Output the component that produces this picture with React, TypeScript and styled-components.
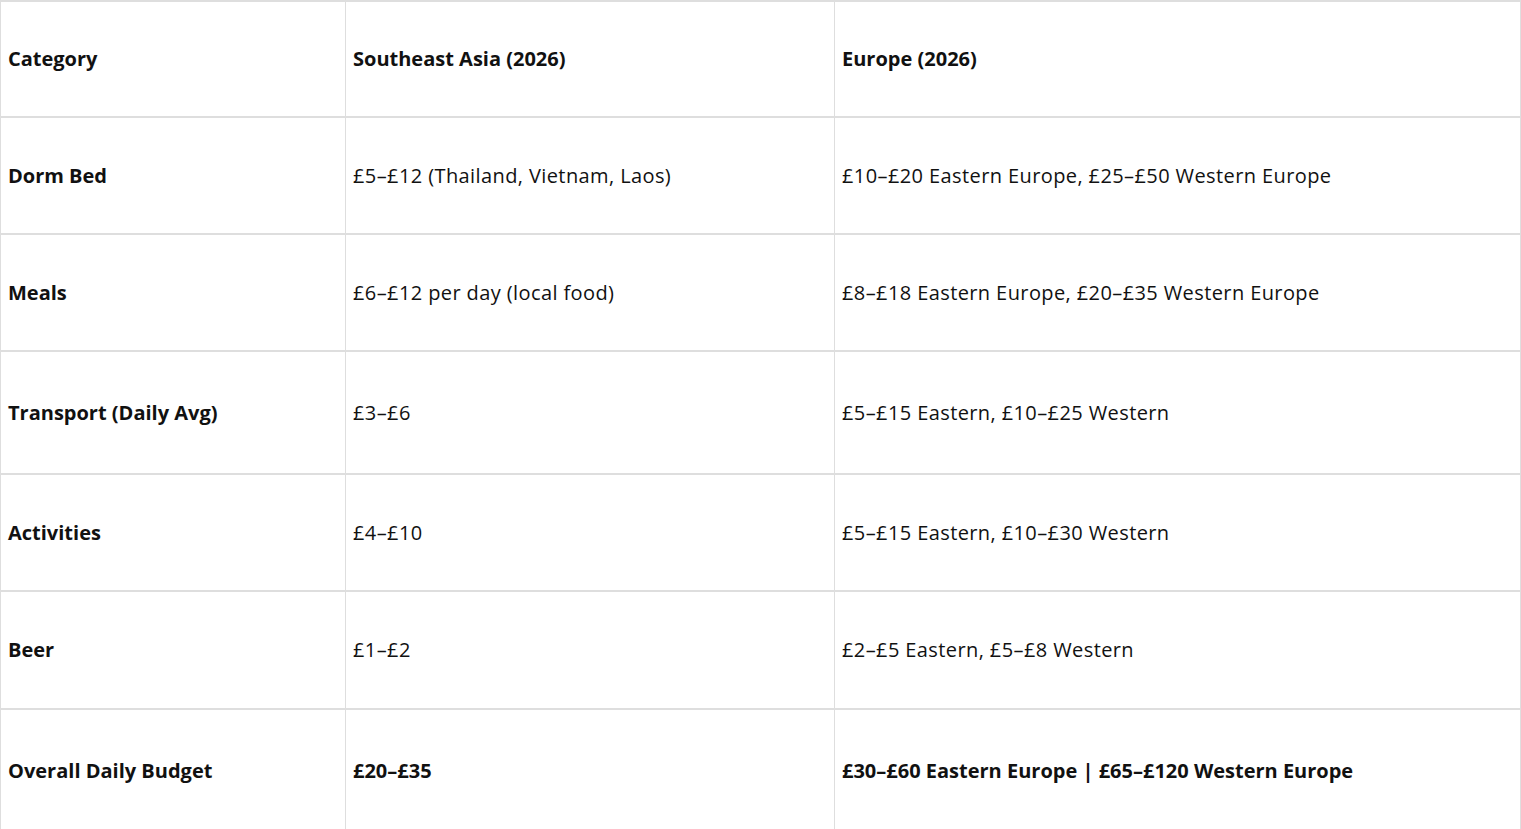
import React from 'react';
import styled, {createGlobalStyle} from 'styled-components';

const GlobalStyle = createGlobalStyle`
    html, body {
        margin: 0;
        padding: 0;
        background: #ffffff;
    }
    body {
        font-family: 'Open Sans', 'Noto Sans', sans-serif;
        color: #111111;
    }
`

type Row = {
    category: string
    asia: string
    europe: string
    bold?: boolean
    height: number
}

const rows: Row[] = [
    {category: 'Dorm Bed', asia: '£5–£12 (Thailand, Vietnam, Laos)', europe: '£10–£20 Eastern Europe, £25–£50 Western Europe', height: 117},
    {category: 'Meals', asia: '£6–£12 per day (local food)', europe: '£8–£18 Eastern Europe, £20–£35 Western Europe', height: 117},
    {category: 'Transport (Daily Avg)', asia: '£3–£6', europe: '£5–£15 Eastern, £10–£25 Western', height: 123},
    {category: 'Activities', asia: '£4–£10', europe: '£5–£15 Eastern, £10–£30 Western', height: 117},
    {category: 'Beer', asia: '£1–£2', europe: '£2–£5 Eastern, £5–£8 Western', height: 118},
    {category: 'Overall Daily Budget', asia: '£20–£35', europe: '£30–£60 Eastern Europe | £65–£120 Western Europe', bold: true, height: 124},
]

export default function App() {
    return (
        <>
            <GlobalStyle/>
            <Table>
                <colgroup>
                    <col style={{width: 345}}/>
                    <col style={{width: 489}}/>
                    <col/>
                </colgroup>
                <thead>
                <Tr $height={116}>
                    <Th>Category</Th>
                    <Th>Southeast Asia (2026)</Th>
                    <Th>Europe (2026)</Th>
                </Tr>
                </thead>
                <tbody>
                {rows.map(r => (
                    <Tr key={r.category} $height={r.height}>
                        <Th>{r.category}</Th>
                        <Td $bold={r.bold}>{r.asia}</Td>
                        <Td $bold={r.bold}>{r.europe}</Td>
                    </Tr>
                ))}
                </tbody>
            </Table>
        </>
    );
}

const Table = styled.table`
    width: 1521px;
    border-collapse: collapse;
    table-layout: fixed;
`

const Tr = styled.tr<{ $height: number }>`
    height: ${p => p.$height}px;
`

const Th = styled.th`
    text-align: left;
    font-weight: 700;
    font-size: 20px;
    padding: 0 7px 1px;
    border: 1px solid #dedede;
    border-top-width: 2px;
    vertical-align: middle;
    letter-spacing: 0;
`

const Td = styled.td<{ $bold?: boolean }>`
    text-align: left;
    font-weight: ${p => (p.$bold ? 700 : 400)};
    font-size: 20px;
    padding: 0 7px 1px;
    border: 1px solid #dedede;
    border-top-width: 2px;
    vertical-align: middle;
    letter-spacing: ${p => (p.$bold ? '0' : '0.4px')};
`
